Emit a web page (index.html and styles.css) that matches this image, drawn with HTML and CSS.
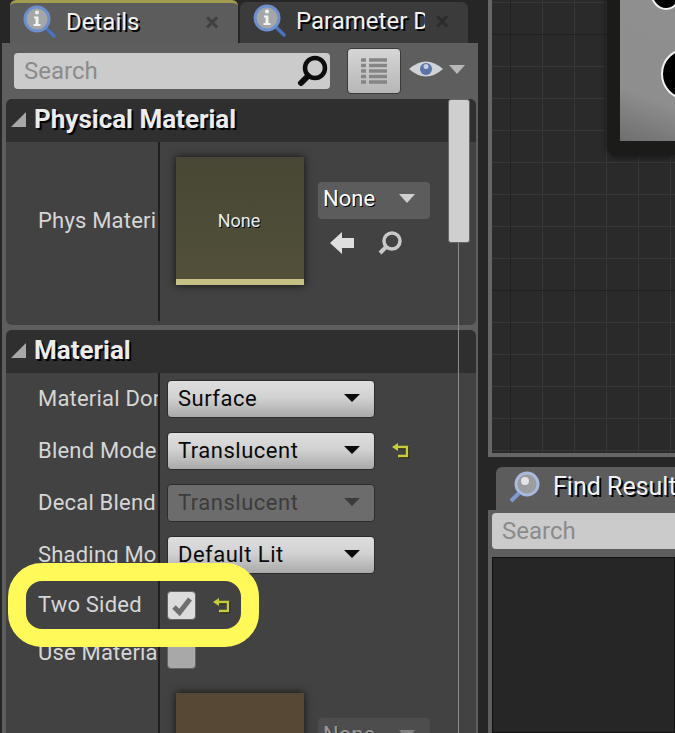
FILE: index.html
```html
<!DOCTYPE html>
<html>
<head>
  <meta charset="utf-8">
  <title>Material Details</title>
  <link rel="stylesheet" href="styles.css">
</head>
<body>
  <div class="app">
    <div class="left">
      <div class="tabs">
        <div class="tab tab-on">
          <svg class="tab-icon" viewBox="0 0 34 34"><use href="#info"/></svg>
          <span class="tab-name">Details</span>
          <span class="tab-x">&times;</span>
        </div>
        <div class="tab">
          <svg class="tab-icon" viewBox="0 0 34 34"><use href="#info"/></svg>
          <span class="tab-name">Parameter D</span>
          <span class="tab-x">&times;</span>
        </div>
      </div>
      <div class="panel">
        <div class="toolbar">
          <div class="search">
            <span>Search</span>
            <svg class="search-icon" viewBox="0 0 32 32"><circle cx="18" cy="13" r="10" fill="none" stroke="#0c0c0c" stroke-width="4.5"/><path d="M11 21 L4 28" stroke="#0c0c0c" stroke-width="6" stroke-linecap="round"/></svg>
          </div>
          <div class="grid-btn">
            <svg viewBox="0 0 28 30" width="28" height="30"><path d="M1 4H6M9 4H27M1 9.500H6M9 9.500H27M1 15H6M9 15H27M1 20.500H6M9 20.500H27M1 26H6M9 26H27" stroke="#858585" stroke-width="3.500"/></svg>
          </div>
          <svg class="eye" viewBox="0 0 60 30" width="60" height="30"><path d="M1 14 Q18 -1 35 14 Q18 29 1 14Z" fill="#d0d2d6"/><circle cx="18" cy="14" r="6" fill="#5b74a8"/><circle cx="18" cy="11.500" r="2.500" fill="#c5cde0"/><path d="M41 10H57L49 19Z" fill="#b8b8b8"/></svg>
        </div>

        <div class="details">
          <div class="category cat-first">
            <div class="cat-head"><i class="cat-arrow"></i>Physical Material</div>
            <div class="cat-body">
              <div class="row row-asset">
                <div class="label">Phys Materi</div>
                <div class="value asset">
                  <div class="thumb">None</div>
                  <div class="asset-side">
                    <div class="asset-combo"><span>None</span><i class="combo-arrow"></i></div>
                    <div class="asset-tools">
                      <svg viewBox="0 0 26 26" width="26" height="26"><path d="M1 13 L13 2 V8 H25 V18 H13 V24Z" fill="#dedede"/></svg>
                      <svg viewBox="0 0 26 26" width="26" height="26"><circle cx="15" cy="11" r="8" fill="none" stroke="#c8c8c8" stroke-width="3.500"/><path d="M9 17 L3 23" stroke="#c8c8c8" stroke-width="4"/></svg>
                    </div>
                  </div>
                </div>
              </div>
            </div>
          </div>

          <div class="category">
            <div class="cat-head"><i class="cat-arrow"></i>Material</div>
            <div class="cat-body">
              <div class="row">
                <div class="label">Material Dor</div>
                <div class="value"><div class="drop"><span>Surface</span><i class="drop-arrow"></i></div></div>
              </div>
              <div class="row">
                <div class="label">Blend Mode</div>
                <div class="value">
                  <div class="drop"><span>Translucent</span><i class="drop-arrow"></i></div>
                  <svg class="reset" viewBox="0 0 18 16"><use href="#reset"/></svg>
                </div>
              </div>
              <div class="row">
                <div class="label">Decal Blend</div>
                <div class="value"><div class="drop drop-off"><span>Translucent</span><i class="drop-arrow"></i></div></div>
              </div>
              <div class="row">
                <div class="label">Shading Mo</div>
                <div class="value"><div class="drop"><span>Default Lit</span><i class="drop-arrow"></i></div></div>
              </div>
              <div class="row row-check">
                <div class="label">Two Sided</div>
                <div class="value">
                  <div class="check">
                    <svg viewBox="0 0 28 28" width="28" height="28"><path d="M6 15 L11.500 20.500 L22 7" fill="none" stroke="#6e6e6e" stroke-width="5"/></svg>
                  </div>
                  <svg class="reset" viewBox="0 0 18 16"><use href="#reset"/></svg>
                </div>
              </div>
              <div class="row row-check row-use">
                <div class="label">Use Materia</div>
                <div class="value"><div class="check check-off"></div></div>
              </div>
              <div class="row row-asset row-last">
                <div class="label"></div>
                <div class="value asset">
                  <div class="thumb thumb-brown"></div>
                  <div class="asset-side">
                    <div class="asset-combo combo-off"><span>None</span><i class="combo-arrow"></i></div>
                  </div>
                </div>
              </div>
            </div>
          </div>

          <div class="scroll"><div class="scroll-thumb"></div></div>
        </div>
      </div>
    </div>

    <div class="right">
      <div class="graph">
        <div class="node">
          <div class="node-face">
            <i class="pin pin-a"></i>
            <i class="pin pin-b"></i>
          </div>
        </div>
      </div>
      <div class="find">
        <div class="find-tab">
          <svg class="tab-icon" viewBox="0 0 34 34">
            <circle cx="19" cy="14" r="11" fill="#9a9ca0" stroke="#a9bbdc" stroke-width="3"/>
            <circle cx="17" cy="11" r="4" fill="#e4e4e4"/>
            <path d="M11 23 L3 31" stroke="#7f9ad0" stroke-width="4"/>
          </svg>
          <span class="tab-name">Find Results</span>
        </div>
        <div class="find-panel">
          <div class="search find-search"><span>Search</span></div>
          <div class="results"></div>
        </div>
      </div>
    </div>
  </div>

  <div class="highlight"></div>

  <svg class="defs" width="0" height="0">
    <defs>
      <g id="info">
        <path d="M24 23 L32 31" stroke="#4a72bd" stroke-width="3.500" stroke-linecap="round"/>
        <circle cx="15" cy="14" r="12" fill="#a4a6a8" stroke="#6d8fce" stroke-width="3"/>
        <circle cx="15" cy="7.500" r="2" fill="#f2f2f2"/>
        <path d="M12 11.500H16.500V19H18.500V21H11.500V19H13.500V13.500H12Z" fill="#f2f2f2"/>
      </g>
      <g id="reset">
        <path d="M5 4H15V13H6" fill="none" stroke="#1d1d10" stroke-width="2.400" transform="translate(1 1)"/>
        <path d="M5 4H15V13H6" fill="none" stroke="#c8cc3c" stroke-width="2.400"/>
        <path d="M0 4 L6 0 V8Z" fill="#c8cc3c"/>
      </g>
    </defs>
  </svg>
</body>
</html>
```

FILE: styles.css
```css
* {
  box-sizing: border-box;
}

html, body {
  margin: 0;
  height: 100%;
  overflow: hidden;
}

body {
  position: relative;
  background: #262626;
  font-family: Roboto, "Liberation Sans", sans-serif;
}

.app {
  display: flex;
  height: 733px;
}

.defs {
  position: absolute;
}

/* left column */
.left {
  width: 478px;
  flex: none;
  display: flex;
  flex-direction: column;
}

.tabs {
  height: 43px;
  padding: 0 8px 0 10px;
  display: flex;
  gap: 2px;
}

.tab {
  width: 228px;
  margin-top: 2px;
  padding: 0 0 4px 12px;
  display: flex;
  align-items: center;
  background: #3b3b3b;
  border-radius: 6px 6px 0 0;
}

.tab-on {
  margin-top: 0;
  padding-bottom: 3px;
  background: #5c5c5c;
  border-top: 3px solid #a39c50;
}

.tab-icon {
  width: 34px;
  height: 34px;
  flex: none;
}

.tab-name {
  margin-left: 10px;
  font-size: 24px;
  color: #f2f2f2;
  text-shadow: 2px 2px 0 #000;
  white-space: nowrap;
}

.tab:not(.tab-on) .tab-name {
  width: 129px;
  flex: none;
  overflow: hidden;
}

.tab-x {
  margin-left: auto;
  margin-right: 19px;
  font-size: 26px;
  font-weight: 700;
  line-height: 1;
  color: #2c2c2c;
}

.tab-on .tab-x {
  color: #404040;
}

.panel {
  flex: 1;
  min-height: 0;
  margin-left: 2px;
  padding: 0 2px 0 4px;
  background: #5e5e5e;
  display: flex;
  flex-direction: column;
}

.toolbar {
  height: 56px;
  flex: none;
  padding: 10px 0 0 8px;
  display: flex;
  align-items: flex-start;
}

.search {
  width: 316px;
  height: 36px;
  padding-left: 10px;
  display: flex;
  align-items: center;
  justify-content: space-between;
  background: #cbcbcb;
  border-radius: 4px;
  font-size: 24px;
  color: #8b8b8b;
}

.search-icon {
  width: 32px;
  height: 32px;
  margin-right: 1px;
}

.grid-btn {
  width: 54px;
  height: 46px;
  margin: -5px 0 0 17px;
  display: flex;
  align-items: center;
  justify-content: center;
  background: linear-gradient(#d6d6d6, #b6b6b6);
  border: 1px solid #3a3a3a;
  border-radius: 4px;
}

.eye {
  margin: 2px 0 0 7px;
}

.details {
  position: relative;
  flex: 1;
  min-height: 0;
  overflow: hidden;
}

/* property categories */
.category {
  background: #424242;
  border-radius: 6px 6px 0 0;
}

.cat-first {
  height: 226px;
  margin-bottom: 5px;
  border-radius: 6px;
}

.cat-head {
  height: 43px;
  padding: 0 0 3px 5px;
  display: flex;
  align-items: center;
  gap: 8px;
  background: #2f2f2f;
  border-radius: 6px 6px 0 0;
  font-size: 26px;
  font-weight: 700;
  color: #ececec;
  text-shadow: 2px 2px 0 #000;
}

.cat-arrow {
  width: 0;
  height: 0;
  border-left: 15px solid transparent;
  border-bottom: 15px solid #a8a8a8;
}

.row {
  display: flex;
  height: 52px;
}

.label {
  width: 154px;
  height: 100%;
  flex: none;
  padding: 0 0 2px 32px;
  border-right: 2px solid #1f1f1f;
  display: flex;
  align-items: center;
  overflow: hidden;
  white-space: nowrap;
  font-size: 22px;
  letter-spacing: 0.200px;
  color: #d6d6d6;
}

.value {
  flex: 1;
  padding-left: 7px;
  display: flex;
  align-items: center;
}

.row-asset {
  height: 179px;
}

.row-asset .label {
  padding-bottom: 22px;
}

.row-check {
  height: 49px;
}

.row-use {
  height: 48px;
}

.row-use .label {
  padding-bottom: 4px;
}

.row-last {
  height: 200px;
}

.asset {
  align-items: flex-start;
  padding: 15px 0 0 16px;
}

.thumb {
  width: 128px;
  height: 128px;
  padding: 4px 2px 0 0;
  display: flex;
  align-items: center;
  justify-content: center;
  background-image: linear-gradient(#484735, #525039);
  border-bottom: 6px solid #c8c184;
  box-shadow: 0 0 8px #111;
  font-size: 18px;
  color: #ececec;
  text-shadow: 1px 1px 0 #000;
}

.thumb-brown {
  background: #574735;
  border-bottom: 0;
}

.asset-side {
  margin: 25px 0 0 14px;
  width: 112px;
}

.asset-combo {
  height: 37px;
  padding: 0 15px 4px 5px;
  display: flex;
  align-items: center;
  justify-content: space-between;
  background: #5c5c5c;
  border-radius: 4px;
  font-size: 22px;
  color: #fff;
  text-shadow: 1px 1px 0 #000;
}

.combo-arrow {
  width: 0;
  height: 0;
  border: 8px solid transparent;
  border-top: 9px solid #cfcfcf;
  border-bottom: 0;
}

.combo-off {
  opacity: 0.45;
}

.asset-tools {
  margin-top: 11px;
  padding-left: 11px;
  display: flex;
  gap: 22px;
}

.drop {
  width: 208px;
  height: 38px;
  padding: 0 14px 2px 10px;
  display: flex;
  align-items: center;
  justify-content: space-between;
  background: linear-gradient(#dedede, #d2d2d2 45%, #a9a9a9);
  border: 1px solid #2c2c2c;
  border-radius: 4px;
  font-size: 22px;
  letter-spacing: 0.500px;
  color: #0a0a0a;
}

.drop-arrow {
  width: 0;
  height: 0;
  border: 8px solid transparent;
  border-top: 8px solid #0a0a0a;
  border-bottom: 0;
}

.drop-off {
  background: #6c6c6c;
  color: #3c3c3c;
}

.drop-off .drop-arrow {
  border-top-color: #3c3c3c;
}

.reset {
  width: 18px;
  height: 16px;
  margin-left: 17px;
}

.check {
  width: 29px;
  height: 29px;
  background: #dcdcdc;
  border: 1px solid #666;
  border-radius: 4px;
}

.check-off {
  background: #a8a8a8;
}

.scroll {
  position: absolute;
  top: 0;
  bottom: 0;
  left: 442px;
  width: 22px;
  display: flex;
  justify-content: center;
}

.scroll::before {
  content: "";
  position: absolute;
  top: 0;
  bottom: 0;
  left: 10px;
  width: 1px;
  background: #8c8c8c;
}

.scroll-thumb {
  position: relative;
  width: 22px;
  height: 144px;
  background: #cfcfcf;
  border: 1px solid #666;
  border-radius: 3px;
}

/* right column */
.right {
  flex: 1;
  min-width: 0;
  padding-left: 10px;
  display: flex;
  flex-direction: column;
}

.graph {
  position: relative;
  height: 457px;
  flex: none;
  border-left: 4px solid #666;
  border-bottom: 4px solid #666;
  background-color: #2a2a2a;
  background-image:
    linear-gradient(#212121 1px, transparent 1px),
    linear-gradient(90deg, #212121 1px, transparent 1px),
    linear-gradient(#383838 1px, transparent 1px),
    linear-gradient(90deg, #383838 1px, transparent 1px);
  background-size: 256px 256px, 256px 256px, 32px 32px, 32px 32px;
  background-position: 0 34px, 18px 0, 0 2px, 18px 0;
  overflow: hidden;
}

.node {
  position: absolute;
  left: 115px;
  top: -20px;
  width: 68px;
  height: 175px;
  padding: 0 0 14px 13px;
  background: #1b1c1a;
  border-radius: 10px 0 0 10px;
  box-shadow: 0 2px 6px #151515;
}

.node-face {
  position: relative;
  height: 100%;
  overflow: hidden;
  background: linear-gradient(20deg, #6e6e6e, #8e8e8e 30%, #8f8f8f);
}

.pin {
  position: absolute;
  border-radius: 50%;
  background: #000;
  border: 2px solid #f2f2f2;
}

.pin-a {
  left: 30px;
  top: -8px;
  width: 32px;
  height: 38px;
}

.pin-b {
  left: 41px;
  top: 68px;
  width: 52px;
  height: 52px;
}

.find {
  flex: 1;
  min-height: 0;
  padding-top: 10px;
}

.find-tab {
  height: 43px;
  margin-left: 8px;
  padding: 0 0 4px 12px;
  display: flex;
  align-items: center;
  overflow: hidden;
  background: #5c5c5c;
  border-radius: 6px 0 0 0;
}

.find-tab .tab-name {
  margin-left: 11px;
  font-size: 25px;
}

.find-panel {
  height: 223px;
  padding: 3px 0 0 4px;
  background: #5e5e5e;
}

.find-search {
  width: 100%;
  border-radius: 4px 0 0 4px;
}

.results {
  height: 176px;
  margin-top: 8px;
  background: #262626;
  border: 1px solid #111;
}

/* tutorial callout drawn over the screenshot */
.highlight {
  position: absolute;
  left: 8px;
  top: 563px;
  width: 251px;
  height: 84px;
  border: 18px solid #fff95a;
  border-radius: 34px;
}
```
